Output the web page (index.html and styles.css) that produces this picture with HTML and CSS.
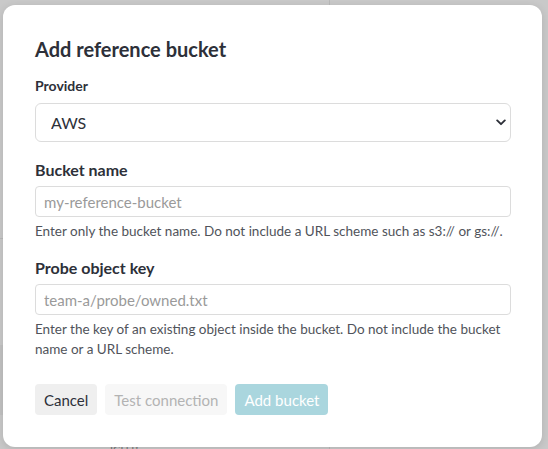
FILE: index.html
```html
<!DOCTYPE html>
<html>
<head>
<meta charset="utf-8">
<link rel="stylesheet" href="styles.css">
</head>
<body>
<div class="backdrop">
  <div class="bg-line bg-v-top"></div>
  <div class="bg-line bg-h-left"></div>
  <div class="bg-block"></div>
  <div class="bg-v-bottom"></div>
  <div class="bg-text">ICU B</div>
  <div class="modal">
    <h2 class="title">Add reference bucket</h2>
    <label class="label label-sm">Provider</label>
    <div class="select-wrap">
      <select class="select">
        <option>AWS</option>
      </select>
      <svg class="chev" width="10" height="7" viewBox="0 0 10 7"><path d="M1.2 1.4 L5 5.2 L8.8 1.4" fill="none" stroke="#2d3039" stroke-width="1.9" stroke-linecap="round" stroke-linejoin="round"/></svg>
    </div>
    <label class="label label-lg first-gap">Bucket name</label>
    <input class="input" type="text" placeholder="my-reference-bucket">
    <p class="help">Enter only the bucket name. Do not include a URL scheme such as s3:// or gs://.</p>
    <label class="label label-lg second-gap">Probe object key</label>
    <input class="input" type="text" placeholder="team-a/probe/owned.txt">
    <p class="help">Enter the key of an existing object inside the bucket. Do not include the bucket name or a URL scheme.</p>
    <div class="actions">
      <button class="btn btn-cancel">Cancel</button>
      <button class="btn btn-test">Test connection</button>
      <button class="btn btn-add">Add bucket</button>
    </div>
  </div>
</div>
</body>
</html>
```
FILE: styles.css
```css
* { box-sizing: border-box; }
html, body { margin: 0; padding: 0; }
body {
  width: 548px;
  height: 449px;
  overflow: hidden;
  background: #c9c9c9;
  font-family: "Lato", "Liberation Sans", sans-serif;
}
.backdrop {
  position: relative;
  width: 548px;
  height: 449px;
  padding: 5px 6px 2px 3px;
}
.bg-line { position: absolute; background: #b9b9b9; }
.bg-v-top { left: 329px; top: 0; width: 1px; height: 5px; }
.bg-h-left { left: 0; top: 238px; width: 3px; height: 1px; }
.bg-block { position: absolute; left: 0; top: 345px; width: 3px; height: 70px; background: #c2c2c2; }
.bg-v-bottom { position: absolute; left: 329px; top: 447px; width: 1px; height: 2px; background: #b9b9b9; }
.bg-text { position: absolute; left: 110px; top: 444px; font-size: 11px; line-height: 12px; color: #777; }
.modal {
  position: relative;
  width: 539px;
  height: 442px;
  background: #fff;
  border-radius: 12px;
  padding: 32px 31px 32px 32px;
  display: flex;
  flex-direction: column;
  box-shadow: 0 2px 8px rgba(0,0,0,0.12);
}
.title {
  margin: 0;
  font-size: 20px;
  line-height: 24px;
  font-weight: 700;
  color: #2d3039;
}
.label {
  display: block;
  font-weight: 700;
  color: #2d3039;
}
.label-sm {
  margin-top: 15px;
  font-size: 14px;
  line-height: 20px;
}
.label-lg {
  font-size: 16px;
  line-height: 20px;
}
.first-gap { margin-top: 18px; }
.second-gap { margin-top: 17px; }
.select-wrap {
  position: relative;
  margin-top: 7px;
}
.select {
  display: block;
  width: 100%;
  height: 39px;
  appearance: none;
  -webkit-appearance: none;
  border: 1px solid #dcdcdc;
  border-radius: 6px;
  background: #fff;
  padding: 0 15px;
  font-family: inherit;
  font-size: 16px;
  color: #2d3039;
}
.chev { position: absolute; right: 5px; top: 16px; }
.input {
  display: block;
  width: 100%;
  height: 31px;
  margin-top: 6px;
  border: 1px solid #dcdcdc;
  border-radius: 4px;
  padding: 0 8px;
  font-family: inherit;
  font-size: 15px;
  color: #2d3039;
}
.input::placeholder { color: #9a9a9a; }
.help {
  margin: 4px 0 0;
  font-size: 13.5px;
  line-height: 20px;
  color: #50535a;
}
.actions {
  display: flex;
  gap: 8px;
  margin-top: 25px;
}
.btn {
  height: 31px;
  border: none;
  border-radius: 4px;
  padding: 0 9px;
  font-family: inherit;
  font-size: 15px;
}
.btn-cancel { background: #efefef; color: #2d3039; }
.btn-test { background: #f7f7f7; color: #b3b3b3; }
.btn-add { background: #aad6de; color: #fff; }
```
